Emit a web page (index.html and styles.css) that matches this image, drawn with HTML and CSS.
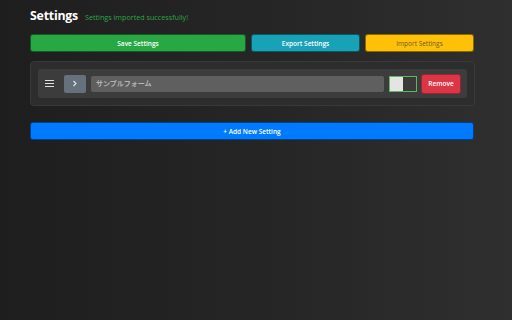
FILE: index.html
```html
<!DOCTYPE html>
<html>
<head>
<meta charset="utf-8">
<link rel="stylesheet" href="styles.css">
</head>
<body>
<div class="page">
  <div class="header">
    <h1 class="title">Settings</h1>
    <span class="status">Settings imported successfully!</span>
  </div>
  <div class="actions">
    <button class="btn btn-save">Save Settings</button>
    <button class="btn btn-export">Export Settings</button>
    <button class="btn btn-import">Import Settings</button>
  </div>
  <div class="panel">
    <div class="row">
      <span class="handle"><i></i><i></i><i></i></span>
      <button class="chev"><svg width="6" height="7" viewBox="0 0 6 7"><path d="M1.5 1 L4 3.5 L1.5 6" fill="none" stroke="#e6e6e6" stroke-width="1.1"/></svg></button>
      <div class="name">サンプルフォーム</div>
      <span class="toggle"><span class="knob"></span></span>
      <button class="btn-remove">Remove</button>
    </div>
  </div>
  <button class="btn btn-add">+ Add New Setting</button>
</div>
</body>
</html>
```
FILE: styles.css
```css
html, body {
  margin: 0;
  height: 100%;
}
body {
  background: linear-gradient(90deg, #1e1e1e 0%, #262626 55%, #2f2f2f 100%);
  font-family: "Open Sans", "Noto Sans", "Noto Sans CJK JP", sans-serif;
  color: #fff;
}
.page {
  width: 444px;
  padding: 6px 0 0 30px;
}
.header {
  display: flex;
  align-items: baseline;
  gap: 7px;
  height: 28px;
}
.title {
  margin: 0;
  font-size: 12.3px;
  font-weight: 700;
  line-height: 20px;
  letter-spacing: -0.2px;
}
.status {
  font-size: 7.2px;
  color: #28a745;
}
.actions {
  display: flex;
  gap: 5px;
}
.btn {
  height: 18px;
  border: 1px solid rgba(0,0,0,0.45);
  border-radius: 3px;
  color: #fff;
  font-family: inherit;
  font-size: 6.5px;
  font-weight: 600;
  padding: 0;
}
.btn-save { flex: 2; background: #28a745; }
.btn-export { flex: 1; background: #17a2b8; }
.btn-import { flex: 1; background: #ffc107; color: #6b5a2a; font-weight: 400; }
.panel {
  margin-top: 9px;
  background: #2d2d2d;
  border: 1px solid #393939;
  border-radius: 4px;
  padding: 7px;
  width: 429px;
}
.row {
  display: flex;
  align-items: center;
  height: 29px;
  background: #3c3c3c;
  border-radius: 3px;
  padding: 0 6px 0 7px;
}
.handle {
  display: flex;
  flex-direction: column;
  gap: 1.5px;
  width: 9px;
  margin-right: 10px;
}
.handle i {
  display: block;
  height: 1.5px;
  background: #e0e0e0;
}
.chev {
  width: 22px;
  height: 18px;
  border: none;
  border-radius: 2px;
  background: #66717e;
  display: flex;
  align-items: center;
  justify-content: center;
  padding: 0;
  margin-right: 5px;
}
.name {
  flex: 1;
  height: 16px;
  background: #5f5f5f;
  border-radius: 2px;
  font-size: 7px;
  font-weight: 600;
  color: #b4b4b4;
  line-height: 16px;
  padding-left: 5px;
  margin-right: 5px;
}
.toggle {
  width: 26px;
  height: 14px;
  border: 1px solid #5cb85c;
  background: #3a3a3a;
  display: flex;
  margin-right: 4px;
}
.knob {
  width: 13px;
  height: 14px;
  background: #e4e4e4;
}
.btn-remove {
  width: 40px;
  height: 20px;
  border: 1px solid rgba(0,0,0,0.3);
  border-radius: 3px;
  background: #dc3545;
  color: #fff;
  font-family: inherit;
  font-size: 6.5px;
  font-weight: 600;
  padding: 0;
}
.btn-add {
  display: block;
  width: 444px;
  margin-top: 16px;
  background: #007bff;
}
```
